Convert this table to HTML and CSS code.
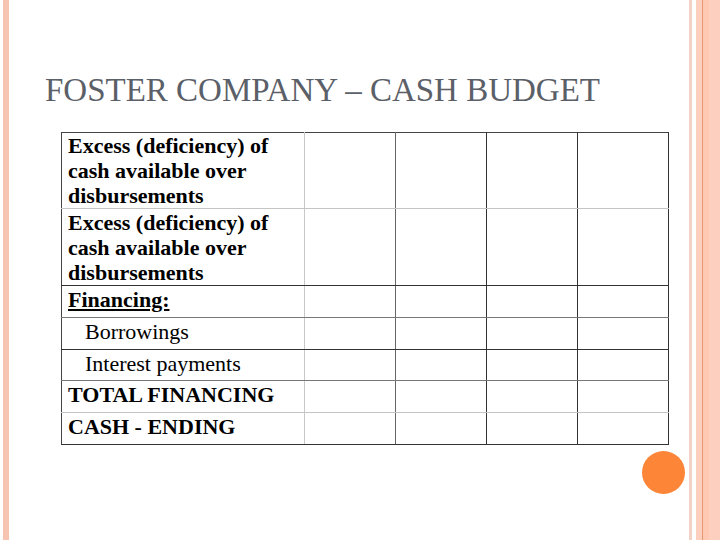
FILE: index.html
```html
<!DOCTYPE html>
<html>
<head>
<meta charset="utf-8">
<link rel="stylesheet" href="styles.css">
</head>
<body>
<div class="slide">
  <h1 class="title">FOSTER COMPANY – CASH BUDGET</h1>
  <table class="budget">
    <tr class="tall first line-light">
      <td class="label bold">Excess (deficiency) of cash available over disbursements</td>
      <td class="c2"></td><td></td><td></td><td></td>
    </tr>
    <tr class="tall line-dark">
      <td class="label bold">Excess (deficiency) of cash available over disbursements</td>
      <td class="c2"></td><td></td><td></td><td></td>
    </tr>
    <tr class="line-mid">
      <td class="label bold"><span class="ul">Financing:</span></td>
      <td class="c2"></td><td></td><td></td><td></td>
    </tr>
    <tr class="line-dark">
      <td class="label indent">Borrowings</td>
      <td class="c2"></td><td></td><td></td><td></td>
    </tr>
    <tr class="line-mid short">
      <td class="label indent">Interest payments</td>
      <td class="c2"></td><td></td><td></td><td></td>
    </tr>
    <tr class="line-light">
      <td class="label bold">TOTAL FINANCING</td>
      <td class="c2"></td><td></td><td></td><td></td>
    </tr>
    <tr class="line-dark">
      <td class="label bold">CASH - ENDING</td>
      <td class="c2"></td><td></td><td></td><td></td>
    </tr>
  </table>
  <div class="dot-row"><span class="dot"></span></div>
</div>
</body>
</html>
```
FILE: styles.css
```css
html, body {
  margin: 0;
  padding: 0;
}
body {
  width: 720px;
  height: 540px;
  overflow: hidden;
  background: linear-gradient(to right,
    #ffffff 0 3px,
    #f6c4b1 3px 9px,
    #ffffff 9px 689px,
    #f2d2c4 689px 692px,
    #ffffff 692px 696px,
    #fccfbf 696px 702px,
    #e9976e 702px 703px,
    #fec8b2 703px 709px,
    #fdcfbe 709px 720px);
}
.slide {
  padding: 71px 0 0 45px;
  display: flex;
  flex-direction: column;
  align-items: flex-start;
}
.title {
  margin: 0;
  font-family: "Liberation Serif", "Times New Roman", "DejaVu Serif", serif;
  font-weight: normal;
  font-size: 33px;
  line-height: 38px;
  color: #5b6068;
  white-space: nowrap;
}
.budget {
  margin: 23px 0 0 16px;
  border-collapse: collapse;
  table-layout: fixed;
  width: 608px;
  border: 1px solid #444;
  font-family: "Liberation Serif", "Times New Roman", "DejaVu Serif", serif;
  font-size: 22px;
  color: #000;
}
.budget td {
  padding: 1px 6px 5px 6px;
  line-height: 25px;
  vertical-align: top;
  border-left: 1px solid #333;
  border-right: 1px solid #333;
  width: 78px;
}
.budget td.label {
  width: 230px;
  border-left: 1px solid #444;
  border-right: 1px solid #c8c8c8;
  white-space: normal;
}
.budget td.c2 {
  border-left: 1px solid #c8c8c8;
  border-right: 1px solid #666;
}
.budget tr.tall td {
  padding-top: 1px;
  padding-bottom: 0;
}
.budget tr.first td {
  padding-top: 0;
}
.budget tr.short td {
  padding-bottom: 4px;
}
.budget tr.line-light td { border-bottom: 1px solid #c4c4c4; }
.budget tr.line-dark td { border-bottom: 1px solid #333; }
.budget tr.line-mid td { border-bottom: 1px solid #777; }
.bold {
  font-weight: bold;
}
.ul {
  text-decoration: underline;
  text-underline-offset: 2px;
}
.budget td.indent {
  padding-left: 23px;
}
.dot-row {
  margin: 6px 0 0 597px;
  display: flex;
}
.dot {
  width: 43px;
  height: 43px;
  border-radius: 50%;
  background: #fd8537;
}
```
